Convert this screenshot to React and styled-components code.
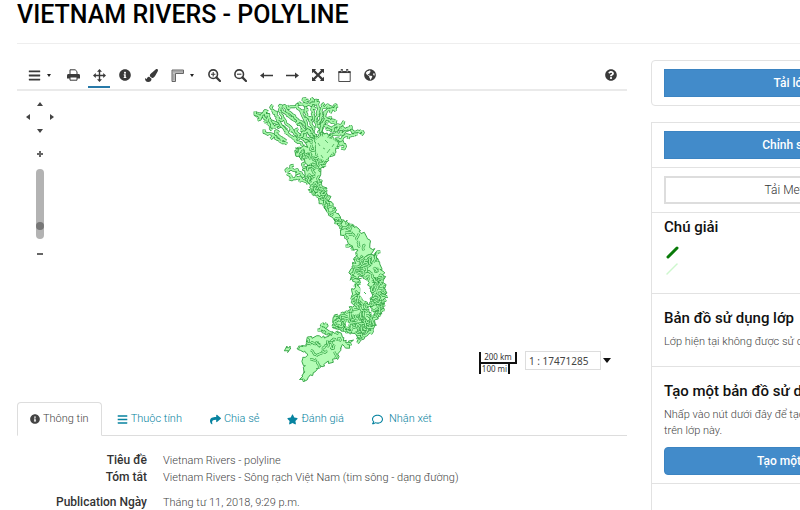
import React from "react";
import styled, { createGlobalStyle, css } from "styled-components";
import { FaInfoCircle, FaPaintBrush, FaGlobeAmericas, FaQuestionCircle, FaShare, FaStar, FaRegComment, FaBars } from "react-icons/fa";

const GlobalStyle = createGlobalStyle`
  *, *::before, *::after { box-sizing: border-box; }
  body {
    margin: 0;
    background: #fff;
    color: #444;
    font-family: Roboto, "Noto Sans", sans-serif;
    font-size: 11px;
    font-weight: 300;
    line-height: 16px;
    overflow: hidden;
  }
  button, input { font: inherit; }
`;

const Page = styled.div`
  min-width: 964px;
  padding: 0 17px;
`;

const Header = styled.header`
  height: 44px;
  border-bottom: 1px solid #eee;
`;

const Title = styled.h1`
  margin: 0;
  color: #000;
  font-size: 25px;
  font-weight: 500;
  line-height: 30px;
`;

const Columns = styled.div`
  display: grid;
  grid-template-columns: minmax(610px, 2fr) minmax(296px, 1fr);
  column-gap: 24px;
  align-items: start;
  padding-top: 16px;
`;

const Toolbar = styled.div`
  display: flex;
  align-items: center;
  gap: 4px;
  height: 31px;
  padding: 0 5px 1px 4px;
  border-bottom: 2px solid #eaeaea;
`;

const Tool = styled.button`
  display: flex;
  align-items: center;
  justify-content: center;
  gap: 6px;
  width: ${(p) => p.$width || 22}px;
  height: 28px;
  padding: 4px 0 0;
  border: 0;
  border-bottom: 2px solid ${(p) => (p.$active ? "#2779a8" : "transparent")};
  background: none;
  color: #3a3a3a;
  ${(p) => p.$last && css`margin-left: auto;`}
  svg { flex: none; display: block; }
`;

const Caret = styled.span`
  border: 2px solid transparent;
  border-top: 3px solid #222;
  border-bottom: 0;
`;

const MapPanel = styled.div`
  position: relative;
`;

const MapSvg = styled.svg`
  display: block;
  width: 100%;
`;

const NavPanel = styled.div`
  position: absolute;
  top: 10px;
  left: 7px;
  display: flex;
  flex-direction: column;
  align-items: center;
  width: 32px;
`;

const PanPad = styled.div`
  display: grid;
  grid-template-columns: 8px 16px 8px;
  grid-template-rows: 6px 20px 8px;
  place-items: center;
`;

const PanButton = styled.button`
  display: flex;
  padding: 0;
  border: 0;
  background: none;
  color: #444;
  grid-area: ${(p) => p.$area};
`;

const ZoomButton = styled.button`
  display: flex;
  align-items: center;
  justify-content: center;
  width: 8px;
  height: 8px;
  margin: ${(p) => (p.$in ? "15px 0 11px" : "11px 0 0")};
  padding: 0;
  border: 0;
  background: none;
  color: #666;
`;

const ZoomSlider = styled.input`
  appearance: none;
  writing-mode: vertical-lr;
  direction: rtl;
  width: 8px;
  height: 70px;
  margin: 0;
  border-radius: 4px;
  background: #b3b3b3;
  &::-webkit-slider-thumb {
    appearance: none;
    width: 8px;
    height: 8px;
    border-radius: 50%;
    background: #777;
  }
`;

const ScaleBar = styled.div`
  position: absolute;
  right: 110px;
  bottom: 28px;
  width: 38px;
  color: #333;
  font-family: "Noto Sans", sans-serif;
  font-size: 8px;
  font-weight: 400;
  line-height: 10px;
  text-align: center;
  white-space: nowrap;
`;

const ScaleKm = styled.div`
  height: 12px;
  border: solid #111;
  border-width: 0 2px 2px;
`;

const ScaleMi = styled.div`
  width: 31px;
  height: 10px;
  border: solid #111;
  border-width: 0 2px;
`;

const ScaleChooser = styled.div`
  position: absolute;
  right: 16px;
  bottom: 32px;
  display: flex;
  align-items: center;
  gap: 2px;
`;

const ScaleInput = styled.input`
  width: 76px;
  height: 19px;
  padding: 0 3px;
  border: 1px solid #ddd;
  color: #444;
  font-family: "Noto Sans", sans-serif;
  font-size: 10px;
  font-weight: 400;
`;

const ScaleButton = styled.button`
  padding: 0;
  border: 4px solid transparent;
  border-top: 5px solid #111;
  border-bottom: 0;
  background: none;
`;

const Tabs = styled.nav`
  display: flex;
  gap: 2px;
  border-bottom: 1px solid #ddd;
`;

const Tab = styled.a`
  display: flex;
  align-items: center;
  gap: ${(p) => (p.$wide ? 6 : 3)}px;
  height: 34px;
  margin-bottom: -1px;
  padding: 0 12px;
  border: 1px solid ${(p) => (p.$active ? "#ddd" : "transparent")};
  border-bottom-color: ${(p) => (p.$active ? "#fff" : "#ddd")};
  border-radius: 4px 4px 0 0;
  color: ${(p) => (p.$active ? "#444" : "#0783a0")};
  text-decoration: none;
  white-space: nowrap;
`;

const Details = styled.dl`
  display: grid;
  grid-template-columns: 130px 1fr;
  column-gap: 16px;
  align-items: baseline;
  margin: 16px 0 0;
  dt {
    color: #333;
    font-size: 12px;
    font-weight: 500;
    text-align: right;
  }
  dd { margin: 0; }
`;

const Gap = styled.div`
  grid-column: 1 / -1;
  height: 8px;
`;

const Aside = styled.aside`
  display: flex;
  flex-direction: column;
  gap: 16px;
`;

const Card = styled.div`
  border: 1px solid #e2e2e2;
  border-radius: ${(p) => p.$radius || 0}px;
`;

const Section = styled.section`
  padding: ${(p) => p.$pad || "8px 12px"};
  & + & { border-top: 1px solid #e2e2e2; }
`;

const Action = styled.button`
  display: block;
  width: 100%;
  height: 28px;
  padding: 0;
  border: ${(p) => (p.$outline ? "2px solid #ddd" : "1px solid #3c84c2")};
  border-radius: ${(p) => p.$radius || 0}px;
  background: ${(p) => (p.$outline ? "#fff" : "#428bca")};
  color: ${(p) => (p.$outline ? "#333" : "#fff")};
  font-size: 12px;
  font-weight: ${(p) => (p.$outline ? 300 : 500)};
`;

const Heading = styled.h2`
  margin: 0;
  color: #111;
  font-size: 15px;
  font-weight: 500;
  line-height: 16px;
  white-space: nowrap;
`;

const Text = styled.p`
  margin: ${(p) => p.$margin || "8px 0 0"};
`;

const LegendSvg = styled.svg`
  display: block;
  margin: 8px 0 6px;
`;

/* ---------- icons ---------- */

const MoveIcon = () => (
  <svg width="13" height="13" viewBox="0 0 13 13" fill="currentColor">
    <path d="M6.500 0 9 2.800H7.200V5.800H10.200V4L13 6.500 10.200 9V7.200H7.200V10.200H9L6.500 13 4 10.200H5.800V7.200H2.800V9L0 6.500 2.800 4V5.800H5.800V2.800H4Z" />
  </svg>
);

const PrintIcon = () => (
  <svg width="13" height="12" viewBox="0 0 13 12">
    <path d="M3 6V.8H8.200L10 2.600V6" fill="#fff" stroke="currentColor" />
    <path d="M1.500 5H11.500C12.500 5 13 5.600 13 6.500V9.500H0V6.500C0 5.600.5 5 1.500 5Z" fill="currentColor" />
    <path d="M3 8H10V11.200H3Z" fill="#fff" stroke="currentColor" />
  </svg>
);

const RulerIcon = () => (
  <svg width="13" height="13" viewBox="0 0 13 13">
    <path d="M1 1H12.500V4.500H4.500V12.500H1Z" fill="#c4c4c4" stroke="#666" />
    <path d="M3 3.500V2M5 3.500V2M7 3.500V2M9 3.500V2M11 3.500V2M3.500 6H2M3.500 8H2M3.500 10H2" stroke="#777" strokeWidth=".7" />
  </svg>
);

const LensIcon = ({ plus }) => (
  <svg width="13" height="13" viewBox="0 0 13 13" fill="none" stroke="currentColor">
    <circle cx="5.200" cy="5.200" r="4.300" strokeWidth="1.600" />
    <path d="M8.400 8.400 12 12" strokeWidth="2.200" strokeLinecap="round" />
    <path d={plus ? "M3 5.200H7.400M5.200 3V7.400" : "M3 5.200H7.400"} strokeWidth="1.100" />
  </svg>
);

const ArrowIcon = ({ right }) => (
  <svg width="13" height="7" viewBox="0 0 13 7" fill="currentColor">
    <path d={right ? "M0 2.700H9V.5L13 3.500 9 6.500V4.300H0Z" : "M13 2.700H4V.5L0 3.500 4 6.500V4.300H13Z"} />
  </svg>
);

const ExtentIcon = () => (
  <svg width="12" height="12" viewBox="0 0 12 12" fill="currentColor">
    <path d="M0 0H4.200L2.900 1.300 6 4.500 9.100 1.300 7.800 0H12V4.200L10.700 2.900 7.500 6 10.700 9.100 12 7.800V12H7.800L9.100 10.700 6 7.500 2.900 10.700 4.200 12H0V7.800L1.300 9.100 4.500 6 1.300 2.900 0 4.200Z" />
  </svg>
);

const CalendarIcon = () => (
  <svg width="13" height="13" viewBox="0 0 13 13" fill="none" stroke="currentColor">
    <path d="M.8 2.500H12.200V12.500H.8Z" strokeWidth=".9" />
    <path d="M.5 3.200H12.500" strokeWidth="1.700" />
    <path d="M3.800 0V4M9.200 0V4" strokeWidth="2" />
    <path d="M3.800 .8V3.200M9.200 .8V3.200" stroke="#fff" strokeWidth=".6" />
  </svg>
);

const Triangle = ({ d, w, h }) => (
  <svg width={w} height={h} viewBox={`0 0 ${w} ${h}`} fill="currentColor"><path d={d} /></svg>
);

/* ---------- river layer ---------- */

function makeRandom(seed) {
  let s = seed;
  return () => {
    s = (s * 1664525 + 1013904223) % 4294967296;
    return s / 4294967296;
  };
}

const rand = makeRandom(20181104);

// [polygon, number of inner rivers]
const AREAS = [
  [[[312, 138], [322, 133], [330, 134], [339, 142], [337, 150], [330, 158], [324, 166], [318, 171], [309, 167], [304, 160], [296, 154], [297, 149], [306, 146]], 65],
  [[[304, 168], [314, 164], [321, 168], [320, 180], [326, 191], [331, 202], [337, 214], [344, 221], [355, 228], [345, 231], [338, 226], [333, 218], [326, 210], [319, 199], [311, 193], [309, 184], [305, 176]], 60],
  [[[343, 221], [356, 228], [364, 234], [370, 242], [373, 250], [369, 260], [362, 266], [356, 262], [357, 252], [349, 244], [341, 233]], 14],
  [[[356, 258], [370, 256], [376, 254], [378, 262], [383, 274], [386, 294], [384, 308], [377, 320], [370, 316], [371, 305], [372, 292], [368, 280], [360, 276], [352, 280], [350, 272], [353, 266]], 85],
  [[[352, 276], [360, 278], [359, 288], [361, 298], [368, 304], [372, 316], [378, 316], [375, 326], [366, 332], [358, 340], [354, 333], [344, 331], [333, 327], [335, 319], [346, 313], [354, 306], [351, 296], [354, 286]], 105],
  [[[298, 345], [305, 347], [308, 339], [318, 335], [326, 338], [332, 334], [339, 331], [345, 341], [352, 342], [349, 347], [341, 345], [339, 354], [334, 361], [325, 364], [318, 370], [311, 374], [306, 380], [301, 379], [304, 371], [303, 360], [309, 354], [304, 350], [298, 350]], 22],
  [[[286, 346], [289, 346], [290, 350], [288, 353], [286, 349]], 0],
];

// Main streams of the northern basins and the small side branches further south.
const STREAMS = [
  [[256, 113], [261, 114], [266, 119], [273, 121], [280, 126], [287, 130]],
  [[257, 115], [260, 117], [264, 112], [269, 117], [268, 125], [272, 130]],
  [[272, 109], [276, 113], [278, 120], [285, 130], [293, 138], [304, 146]],
  [[279, 107], [285, 113], [294, 120], [304, 129], [315, 139]],
  [[283, 107], [289, 112], [298, 120], [308, 128], [317, 136]],
  [[281, 112], [283, 119], [290, 128], [297, 136], [309, 142]],
  [[276, 128], [271, 125], [270, 119]],
  [[266, 133], [272, 135], [279, 141], [287, 144]],
  [[275, 132], [280, 137], [286, 141]],
  [[290, 108], [297, 107], [302, 113], [305, 121], [312, 133]],
  [[303, 101], [306, 103], [305, 112], [309, 119], [314, 130]],
  [[311, 98], [315, 102], [312, 109], [314, 118], [317, 128]],
  [[302, 104], [307, 105], [318, 103], [319, 110], [316, 121]],
  [[338, 106], [332, 108], [328, 105], [323, 107], [321, 114], [318, 124]],
  [[336, 110], [330, 109], [325, 114], [321, 124], [319, 133]],
  [[331, 117], [325, 121], [322, 130], [324, 137]],
  [[336, 124], [331, 122], [326, 118], [322, 126], [320, 132]],
  [[362, 131], [355, 132], [349, 129], [342, 134], [335, 134], [329, 137]],
  [[351, 126], [346, 130], [340, 128], [334, 130], [326, 130]],
  [[354, 136], [347, 135], [342, 139], [335, 140]],
  [[344, 125], [338, 126], [332, 128], [325, 126]],
  [[345, 147], [342, 143], [337, 142], [332, 139]],
  [[296, 132], [301, 136], [306, 137], [312, 143]],
  [[302, 134], [307, 131], [312, 136]],
  [[297, 149], [305, 150], [312, 149]],
  [[296, 153], [303, 155], [310, 155]],
  [[287, 172], [291, 168], [298, 171], [304, 176], [309, 178]],
  [[291, 174], [293, 178], [300, 178], [308, 184]],
  [[303, 166], [309, 168], [317, 174]],
  [[349, 244], [353, 246], [359, 248]],
  [[377, 254], [373, 259], [370, 265], [364, 270]],
  [[322, 323], [326, 327], [325, 332], [331, 334]],
  [[321, 328], [326, 330], [332, 335]],
  [[342, 313], [346, 318], [353, 320]],
  [[335, 318], [342, 321], [351, 324]],
  [[358, 339], [363, 336], [371, 330], [374, 325]],
];

function inside([x, y], poly) {
  let hit = false;
  for (let i = 0, j = poly.length - 1; i < poly.length; j = i++) {
    const [xi, yi] = poly[i];
    const [xj, yj] = poly[j];
    if (yi > y !== yj > y && x < ((xj - xi) * (y - yi)) / (yj - yi) + xi) hit = !hit;
  }
  return hit;
}

function rough(points, amount, close) {
  const out = [];
  const n = close ? points.length : points.length - 1;
  for (let i = 0; i < n; i++) {
    const [ax, ay] = points[i];
    const [bx, by] = points[(i + 1) % points.length];
    const steps = Math.max(1, Math.round(Math.hypot(bx - ax, by - ay) / 2));
    for (let k = 0; k < steps; k++) {
      const t = k / steps;
      out.push([ax + (bx - ax) * t + (rand() - 0.5) * amount, ay + (by - ay) * t + (rand() - 0.5) * amount]);
    }
  }
  if (!close) out.push(points[points.length - 1]);
  return out;
}

const toPath = (points, close) =>
  "M" + points.map(([x, y]) => x.toFixed(1) + " " + y.toFixed(1)).join("L") + (close ? "Z" : "");

function meander(poly, count) {
  const xs = poly.map((p) => p[0]);
  const ys = poly.map((p) => p[1]);
  const x0 = Math.min(...xs);
  const y0 = Math.min(...ys);
  const w = Math.max(...xs) - x0;
  const h = Math.max(...ys) - y0;
  const rivers = [];
  for (let tries = 0; rivers.length < count && tries < count * 40; tries++) {
    let p = [x0 + rand() * w, y0 + rand() * h];
    if (!inside(p, poly)) continue;
    let angle = rand() * Math.PI * 2;
    const line = [p];
    for (let i = 0; i < 4 && inside(p, poly); i++) {
      angle += (rand() - 0.5) * 3;
      p = [p[0] + Math.cos(angle) * 1.8, p[1] + Math.sin(angle) * 1.8];
      line.push(p);
    }
    rivers.push(toPath(line));
  }
  return rivers;
}

const areaShapes = AREAS.map(([poly, count]) => ({
  outline: toPath(rough(poly, 4, true), true),
  rivers: meander(poly, count),
}));

const streamShapes = STREAMS.map((points) => {
  const twigs = [];
  points.forEach(([x, y], i) => {
    if (i === points.length - 1) return;
    const a = rand() * 6.28;
    twigs.push(toPath([[x, y], [x + Math.cos(a) * 2, y + Math.sin(a) * 2], [x + Math.cos(a + 0.8) * 4, y + Math.sin(a + 0.8) * 4]]));
  });
  return toPath(rough(points, 2.4)) + twigs.join("");
});

const CASING = "#1f9233";
const WATER = "#a6f7aa";

const River = ({ d, wide }) => (
  <>
    <path d={d} stroke={CASING} strokeWidth={wide ? 3 : 2.4} />
    <path d={d} stroke={WATER} strokeWidth={wide ? 1.8 : 1.4} />
  </>
);

const RiverMap = () => (
  <MapSvg viewBox="17 91 610 311" role="img" aria-label="Vietnam rivers">
    <g fill="none" strokeLinejoin="round">
      {streamShapes.map((d, i) => <River key={i} d={d} wide />)}
      {areaShapes.map((area, i) => (
        <g key={i}>
          <path d={area.outline} fill="#b4fcb5" stroke="#3aa94a" strokeWidth="1" />
          {area.rivers.map((d, k) => <River key={k} d={d} />)}
        </g>
      ))}
      <path d="M361 280 366 283 369 291 369 299 364 301 360 295Z" fill="#fff" />
      <path d="M351 281 355 283 353 287ZM346 322 349 323 348 327 346 326ZM371 311 374 313 372 316Z" fill="#fff" />
      <path d="M364 292 366 294" stroke="#46b355" />
      <path d="M316 140L321 136L332 139L338 143L334 151L325 161L319 158L316 150Z" fill="#b4fcb5" />
      <path d="M318 143L320 146M325 140L328 143M330 149L327 153M321 155L323 158M334 144L332 147M323 148L325 149" stroke="#58b966" />
    </g>
  </MapSvg>
);

export default function App() {
  return (
    <>
      <GlobalStyle />
      <Page>
        <Header>
          <Title>VIETNAM RIVERS - POLYLINE</Title>
        </Header>
        <Columns>
          <main>
            <Toolbar role="toolbar" aria-label="Map tools">
              <Tool $width={37} aria-label="Menu"><FaBars size={13} /><Caret /></Tool>
              <Tool aria-label="Print"><PrintIcon /></Tool>
              <Tool $active aria-label="Pan"><MoveIcon /></Tool>
              <Tool aria-label="Identify"><FaInfoCircle size={12} /></Tool>
              <Tool aria-label="Style"><FaPaintBrush size={13} /></Tool>
              <Tool $width={33} aria-label="Measure"><RulerIcon /><Caret /></Tool>
              <Tool aria-label="Zoom in"><LensIcon plus /></Tool>
              <Tool aria-label="Zoom out"><LensIcon /></Tool>
              <Tool aria-label="Previous extent"><ArrowIcon /></Tool>
              <Tool aria-label="Next extent"><ArrowIcon right /></Tool>
              <Tool aria-label="Full extent"><ExtentIcon /></Tool>
              <Tool aria-label="Timeline"><CalendarIcon /></Tool>
              <Tool aria-label="Globe view"><FaGlobeAmericas size={12} /></Tool>
              <Tool $last aria-label="Help"><FaQuestionCircle size={12} /></Tool>
            </Toolbar>
            <MapPanel>
              <RiverMap />
              <NavPanel>
                <PanPad>
                  <PanButton $area="1 / 2" aria-label="Pan up"><Triangle w={6} h={4} d="M3 0 6 4H0Z" /></PanButton>
                  <PanButton $area="2 / 1" aria-label="Pan left"><Triangle w={4} h={6} d="M0 3 4 0V6Z" /></PanButton>
                  <PanButton $area="2 / 3" aria-label="Pan right"><Triangle w={4} h={6} d="M4 3 0 0V6Z" /></PanButton>
                  <PanButton $area="3 / 2" aria-label="Pan down"><Triangle w={6} h={4} d="M3 4 0 0H6Z" /></PanButton>
                </PanPad>
                <ZoomButton $in aria-label="Zoom in one level"><Triangle w={6} h={6} d="M2 0H4V2H6V4H4V6H2V4H0V2H2Z" /></ZoomButton>
                <ZoomSlider type="range" min="0" max="100" defaultValue="15" aria-label="Zoom level" />
                <ZoomButton aria-label="Zoom out one level"><Triangle w={6} h={2} d="M0 0H6V2H0Z" /></ZoomButton>
              </NavPanel>
              <ScaleBar>
                <ScaleKm>200 km</ScaleKm>
                <ScaleMi>100 mi</ScaleMi>
              </ScaleBar>
              <ScaleChooser>
                <ScaleInput aria-label="Map scale" defaultValue="1 : 17471285" />
                <ScaleButton aria-label="Choose scale" />
              </ScaleChooser>
            </MapPanel>
            <Tabs>
              <Tab $active href="#info"><FaInfoCircle size={10} />Thông tin</Tab>
              <Tab href="#attributes"><FaBars size={11} />Thuộc tính</Tab>
              <Tab href="#share"><FaShare size={11} />Chia sẻ</Tab>
              <Tab href="#ratings"><FaStar size={11} />Đánh giá</Tab>
              <Tab $wide href="#comments"><FaRegComment size={11} />Nhận xét</Tab>
            </Tabs>
            <Details>
              <dt>Tiêu đề</dt>
              <dd>Vietnam Rivers - polyline</dd>
              <dt>Tóm tắt</dt>
              <dd>Vietnam Rivers - Sông rạch Việt Nam (tim sông - dạng đường)</dd>
              <Gap />
              <dt>Publication Ngày</dt>
              <dd>Tháng tư 11, 2018, 9:29 p.m.</dd>
            </Details>
          </main>
          <Aside>
            <Card $radius={4}>
              <Section><Action>Tải lớp về</Action></Section>
            </Card>
            <Card>
              <Section><Action>Chỉnh sửa lớp</Action></Section>
              <Section><Action $outline>Tải Metadata</Action></Section>
              <Section $pad="6px 12px 8px">
                <Heading>Chú giải</Heading>
                <LegendSvg width="18" height="36" viewBox="0 0 18 36" strokeLinecap="round">
                  <path d="M4 14 13 5" stroke="#087a08" strokeWidth="3" />
                  <path d="M3 31 13 21" stroke="#cdf7cd" strokeWidth="1.500" />
                </LegendSvg>
              </Section>
              <Section $pad="16px 12px">
                <Heading>Bản đồ sử dụng lớp</Heading>
                <Text>Lớp hiện tại không được sử dụng trong bản đồ</Text>
              </Section>
              <Section $pad="16px 12px 8px">
                <Heading>Tạo một bản đồ sử dụng lớp này</Heading>
                <Text $margin="8px 0">Nhấp vào nút dưới đây để tạo ra một bản đồ mới dựa trên lớp này.</Text>
                <Action $radius={4}>Tạo một bản đồ</Action>
              </Section>
              <Section $pad="16px 12px" />
            </Card>
          </Aside>
        </Columns>
      </Page>
    </>
  );
}
